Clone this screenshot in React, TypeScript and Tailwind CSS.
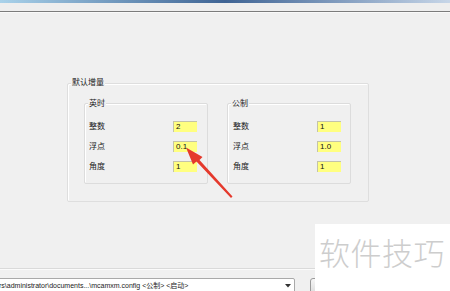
const CN = "font-['Noto_Sans_CJK_SC',sans-serif]"

type Row = { label: string; value: string }

const IMPERIAL: Row[] = [
  { label: '整数', value: '2' },
  { label: '浮点', value: '0.1' },
  { label: '角度', value: '1' },
]

const METRIC: Row[] = [
  { label: '整数', value: '1' },
  { label: '浮点', value: '1.0' },
  { label: '角度', value: '1' },
]

function UnitGroup({ title, rows, pad }: { title: string; rows: Row[]; pad: string }) {
  return (
    <div className="relative w-[124px] h-[81px] border border-[#dcdcdc] rounded-[2px] shadow-[inset_1px_1px_0_#ffffff]">
      <span className={`absolute left-[3px] top-[-7px] bg-[#f0f0f0] px-[1px] text-[8px] leading-[12px] text-[#222] ${CN}`}>
        {title}
      </span>
      <div className={`flex flex-col pt-[12px] ${pad}`}>
        {rows.map((r) => (
          <div key={r.label} className="flex items-center h-[20px]">
            <span className={`w-[84px] text-[8px] leading-none text-[#222] ${CN}`}>{r.label}</span>
            <div className="w-[24px] h-[11px] bg-[#ffff80] border-t border-l border-[#c4c4a8] flex items-center pl-[2px] text-[8px] leading-none text-[#111] font-['Liberation_Sans',sans-serif]">
              {r.value}
            </div>
          </div>
        ))}
      </div>
    </div>
  )
}

export default function App() {
  return (
    <div className="relative w-[450px] h-[291px] overflow-hidden bg-[#f0f0f0]">
      <div className="h-[3px] bg-gradient-to-r from-[#a9d2ea] via-[#3f6494] to-[#c7d6e8]" />
      <div className="h-[8px] bg-[#eeeeee]" />
      <div className="h-px bg-[#7c7c7c]" />
      <div className="h-px bg-[#fafafa]" />

      <div className="pl-[67px] pt-[70px]">
        <div className="relative w-[302px] h-[119px] border border-[#dedede] rounded-[2px] shadow-[inset_1px_1px_0_#ffffff]">
          <span className={`absolute left-[3px] top-[-8px] bg-[#f0f0f0] px-[1px] text-[8px] leading-[12px] text-[#222] ${CN}`}>
            默认增量
          </span>
          <div className="flex gap-[19px] pt-[19px] pl-[16px]">
            <UnitGroup title="英时" rows={IMPERIAL} pad="pl-[4px]" />
            <UnitGroup title="公制" rows={METRIC} pad="pl-[5px]" />
          </div>
        </div>
      </div>

      <div className="mt-[66px] w-[316px] h-px bg-[#dadada]" />
      <div className="h-px w-[316px] bg-[#fbfbfb]" />

      <div className="flex items-start mt-[8px]">
        <div className="ml-[-3px] w-[298px] h-[15px] bg-white border border-[#a9a9a9] rounded-[2px] flex items-center justify-between pr-[3px]">
          <span className="pl-[1px] text-[7px] leading-none text-[#222] whitespace-nowrap font-['Liberation_Sans','Noto_Sans_CJK_SC',sans-serif]">
            rs\administrator\documents...\mcamxm.config &lt;公制&gt; &lt;启动&gt;
          </span>
          <svg width="6" height="4" viewBox="0 0 6 4">
            <path d="M0 0 H6 L3 3.5 Z" fill="#333" />
          </svg>
        </div>
        <div className="ml-[15px] w-[60px] h-[16px] border border-[#9a9a9a] rounded-[3px] bg-gradient-to-b from-[#f6f6f6] to-[#dddddd]" />
      </div>

      <svg className="absolute left-0 top-0 pointer-events-none" width="450" height="291" viewBox="0 0 450 291">
        <path d="M232.5 196.5 L199.5 160 L202.5 157 L186 147.5 L193 164.5 L196.5 161.5 L231 198 Z" fill="#e5392c" />
      </svg>

      <div className="absolute left-[315px] top-[224px] w-[135px] h-[67px] bg-white flex items-start pt-[12px] pl-[4px]">
        <span className={`text-[31px] leading-none font-light tracking-[0.5px] text-[#cdcdcd] ${CN}`}>软件技巧</span>
      </div>
    </div>
  )
}
